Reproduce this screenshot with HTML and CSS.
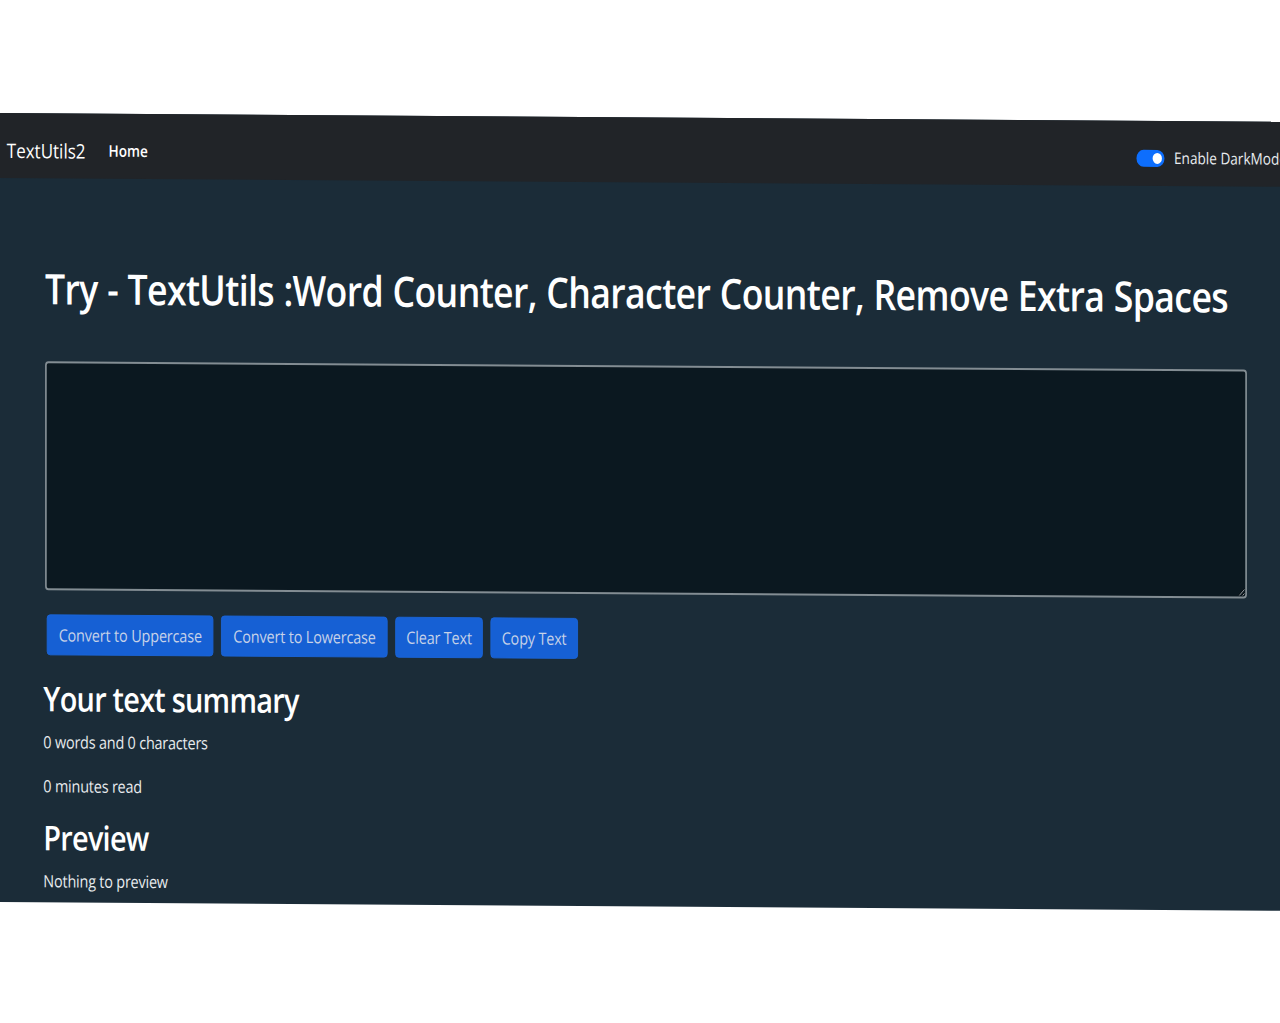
FILE: index.html
```html
<!DOCTYPE html>
<html lang="en">
<head>
<meta charset="utf-8">
<title>TextUtils2</title>
<link rel="stylesheet" href="styles.css">
</head>
<body>
<div class="stage">
  <nav class="navbar">
    <span class="brand">TextUtils2</span>
    <a class="nav-link" href="#">Home</a>
    <div class="switch-group">
      <span class="switch"><span class="knob"></span></span>
      <span class="switch-label">Enable DarkMode</span>
    </div>
  </nav>
  <main class="container">
    <h1 class="title">Try - TextUtils :Word Counter, Character Counter, Remove Extra Spaces</h1>
    <textarea class="text-box" rows="8"></textarea>
    <div class="btn-row">
      <button class="btn">Convert to Uppercase</button>
      <button class="btn">Convert to Lowercase</button>
      <button class="btn">Clear Text</button>
      <button class="btn">Copy Text</button>
    </div>
    <h2 class="sub">Your text summary</h2>
    <p class="info first">0 words and 0 characters</p>
    <p class="info">0 minutes read</p>
    <h2 class="sub preview">Preview</h2>
    <p class="info first">Nothing to preview</p>
  </main>
</div>
</body>
</html>
```
FILE: styles.css
```css
html, body {
  margin: 0;
  padding: 0;
  background: #ffffff;
  overflow: hidden;
  height: 100%;
}

body {
  font-family: "Open Sans", "Noto Sans", sans-serif;
}

.stage {
  margin-top: 113px;
  width: 1506px;
  height: 789px;
  background: #1b2c38;
  transform-origin: 0 0;
  transform: matrix(0.85, 0.0058, 0, 1, 0, 0);
  display: flex;
  flex-direction: column;
}

.navbar {
  box-sizing: border-box;
  height: 65px;
  padding: 9px 0 0 8px;
  background: #212428;
  display: flex;
  align-items: center;
  flex-shrink: 0;
}

.brand {
  font-size: 20px;
  color: #ffffff;
  margin-right: 27px;
}

.nav-link {
  font-size: 16px;
  font-weight: 600;
  color: #ffffff;
  text-decoration: none;
}

.switch-group {
  margin-left: auto;
  margin-right: -8px;
  display: flex;
  align-items: center;
  gap: 11px;
  white-space: nowrap;
}

.switch {
  box-sizing: border-box;
  width: 33px;
  height: 17px;
  border-radius: 9px;
  background: #0d6efd;
  display: flex;
  align-items: center;
  justify-content: flex-end;
  padding-right: 3px;
}

.knob {
  width: 11px;
  height: 11px;
  border-radius: 50%;
  background: #ffffff;
}

.switch-label {
  font-size: 16px;
  color: #e9ecef;
}

.container {
  padding: 85px 39px 0 51px;
}

.title {
  margin: 0 0 48px;
  padding-left: 2px;
  font-size: 42px;
  line-height: 1.2;
  font-weight: 600;
  letter-spacing: -0.78px;
  word-spacing: 1px;
  color: #ffffff;
  white-space: nowrap;
}

.text-box {
  display: block;
  box-sizing: border-box;
  margin: 0 0 0 2px;
  width: 1414px;
  height: 229px;
  background: #0b1820;
  border: 2px solid #838d93;
  border-radius: 4px;
  color: #ffffff;
  color-scheme: dark;
  resize: vertical;
}

.btn-row {
  margin-top: 24px;
  padding-left: 4px;
  display: flex;
  gap: 9px;
}

.btn {
  box-sizing: border-box;
  height: 41px;
  padding: 0 13px;
  background: #1660d4;
  border: 1px solid #1a64d8;
  border-radius: 4px;
  color: #c6d2e8;
  font-family: "Open Sans", "Noto Sans", sans-serif;
  font-size: 17px;
  letter-spacing: -0.2px;
}

.btn:nth-child(3),
.btn:nth-child(4) {
  padding: 0 12px;
}

.sub {
  margin: 23px 0 0;
  font-size: 34px;
  line-height: 1.2;
  font-weight: 600;
  color: #ffffff;
  letter-spacing: -0.9px;
}

.sub.preview {
  margin-top: 19px;
}

.info {
  margin: 18px 0 0;
  font-size: 17px;
  line-height: 1.5;
  color: #e8ebee;
  letter-spacing: -0.25px;
}

.info.first {
  margin-top: 10px;
}
```
